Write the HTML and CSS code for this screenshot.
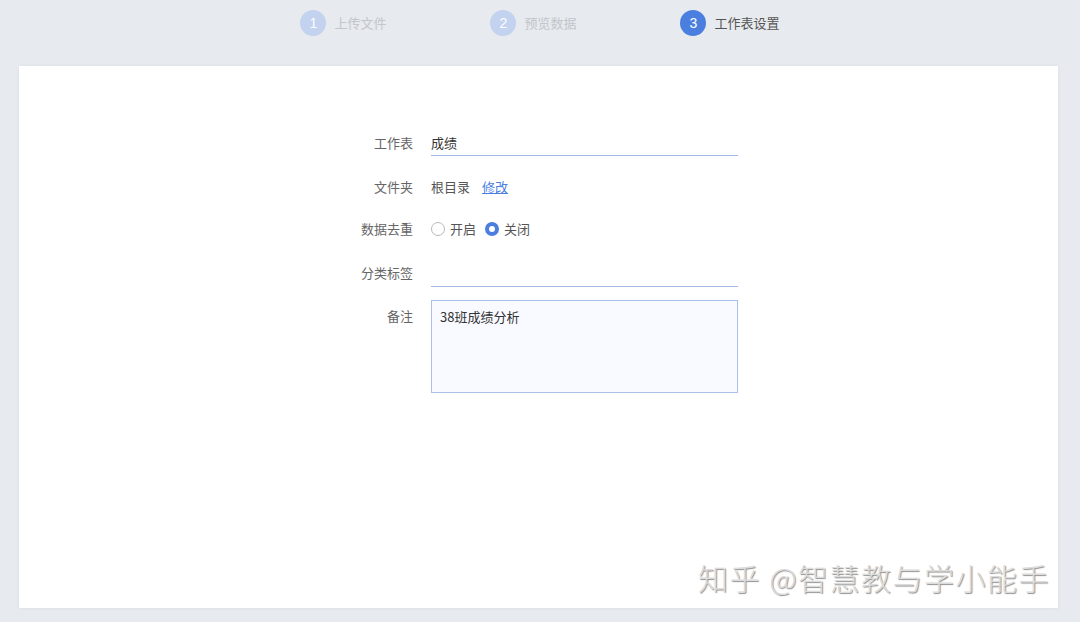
FILE: index.html
```html
<!DOCTYPE html>
<html lang="zh-CN">
<head>
<meta charset="utf-8">
<title>工作表设置</title>
<link rel="stylesheet" href="styles.css">
</head>
<body>
<div class="steps">
  <div class="step done"><span class="num">1</span><span class="txt">上传文件</span></div>
  <div class="step done"><span class="num">2</span><span class="txt">预览数据</span></div>
  <div class="step active"><span class="num">3</span><span class="txt">工作表设置</span></div>
</div>
<div class="card">
  <div class="form">
    <div class="row r1">
      <div class="label">工作表</div>
      <div class="ctrl"><div class="input">成绩</div></div>
    </div>
    <div class="row r2">
      <div class="label">文件夹</div>
      <div class="ctrl"><span class="val">根目录</span><a class="link">修改</a></div>
    </div>
    <div class="row r3">
      <div class="label">数据去重</div>
      <div class="ctrl">
        <span class="radio"></span><span class="rtxt">开启</span>
        <span class="radio on"></span><span class="rtxt">关闭</span>
      </div>
    </div>
    <div class="row r4">
      <div class="label">分类标签</div>
      <div class="ctrl"><div class="input"></div></div>
    </div>
    <div class="row r5">
      <div class="label">备注</div>
      <div class="ctrl"><div class="textarea">38班成绩分析</div></div>
    </div>
  </div>
  <div class="watermark">知乎 @智慧教与学小能手</div>
</div>
</body>
</html>
```
FILE: styles.css
```css
html, body {
  margin: 0;
  padding: 0;
}
body {
  background: #e7eaee;
  font-family: "Noto Sans CJK SC", "Noto Sans", sans-serif;
  font-size: 13px;
  color: #333;
  width: 1080px;
  height: 622px;
  overflow: hidden;
}
.steps {
  height: 46px;
  display: flex;
  justify-content: center;
  align-items: center;
}
.step {
  display: flex;
  align-items: center;
  width: 190px;
}
.step.active {
  width: auto;
}
.num {
  width: 26px;
  height: 26px;
  border-radius: 50%;
  display: flex;
  align-items: center;
  justify-content: center;
  color: #fff;
  font-family: "Liberation Sans", sans-serif;
  font-size: 14px;
  background: #c3d2ee;
  margin-right: 8px;
}
.txt {
  color: #c2c6cc;
  font-size: 13px;
  line-height: 18px;
}
.step.active .num {
  background: #4b7fdf;
}
.step.active .txt {
  color: #555;
}
.card {
  position: relative;
  margin: 20px 22px 0 19px;
  height: 542px;
  background: #fff;
  box-shadow: 0 0 4px rgba(0, 0, 0, 0.06);
  box-sizing: border-box;
  padding-top: 65px;
}
.form {
  margin-left: 314px;
  width: 405px;
  display: flex;
  flex-direction: column;
}
.row {
  display: flex;
  align-items: center;
}
.label {
  width: 80px;
  text-align: right;
  color: #666;
  margin-right: 18px;
  line-height: 18px;
  flex: none;
}
.ctrl {
  width: 307px;
  display: flex;
  align-items: center;
}
.input {
  width: 100%;
  height: 24px;
  line-height: 24px;
  border-bottom: 1px solid #a3b9e4;
  color: #333;
}
.r1 { height: 25px; }
.r1 .label { margin-top: -1px; }
.r2 { height: 24px; margin-top: 19px; }
.r2 .ctrl { margin-top: -1px; }
.r3 { height: 24px; margin-top: 18px; }
.r3 .ctrl { margin-top: -1px; }
.r4 { height: 25px; margin-top: 21px; }
.r4 .label { margin-top: -4px; }
.r5 { margin-top: 13px; align-items: flex-start; }
.r5 .label { margin-top: 7px; }
.val { color: #555; }
.link {
  color: #4b7fdf;
  text-decoration: underline;
  margin-left: 12px;
  cursor: pointer;
}
.radio {
  width: 14px;
  height: 14px;
  box-sizing: border-box;
  border: 1px solid #b6b9be;
  border-radius: 50%;
  background: #fff;
  margin-right: 5px;
  flex: none;
}
.radio.on {
  border: 4px solid #4b7fdf;
}
.rtxt {
  color: #555;
  margin-right: 9px;
}
.textarea {
  width: 100%;
  height: 93px;
  box-sizing: border-box;
  border: 1px solid #a9c0e8;
  background: #f8faff;
  padding: 6px 8px;
  line-height: 20px;
  color: #333;
}
.watermark {
  position: absolute;
  left: 679px;
  top: 491px;
  font-size: 30px;
  font-weight: 300;
  line-height: 40px;
  color: #dcdcdc;
  letter-spacing: 1.5px;
  text-shadow: 1px 1px 1px #8f8f8f;
  white-space: nowrap;
}
```
